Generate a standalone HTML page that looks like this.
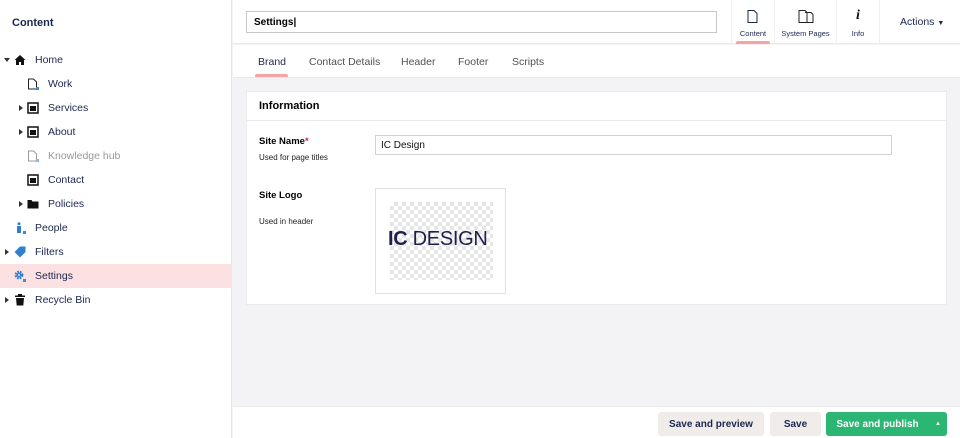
<!DOCTYPE html>
<html><head><meta charset="utf-8"><style>
*{box-sizing:border-box;margin:0;padding:0}
body{width:960px;height:438px;overflow:hidden;font-family:"Liberation Sans",sans-serif;background:#f3f3f5;position:relative;color:#1b264f}
.side{position:absolute;left:0;top:0;width:232px;height:438px;background:#fff;border-right:1px solid #e4e4e8}
.side h1{position:absolute;left:12px;top:17px;font-size:11px;font-weight:bold;color:#1b264f}
.row{position:absolute;left:0;width:232px;height:24px;font-size:10.5px;line-height:25px;color:#1b264f}
.row .t{position:absolute}
.row .ic{position:absolute;top:6px;width:12px;height:12px}
.row .ar{position:absolute;top:9px;width:0;height:0;border-left:4px solid #333;border-top:3px solid transparent;border-bottom:3px solid transparent}
.row .ard{position:absolute;top:10px;width:0;height:0;border-top:4px solid #333;border-left:3px solid transparent;border-right:3px solid transparent}
.top{position:absolute;left:233px;top:0;width:727px;height:44px;background:#fff;border-bottom:1px solid #e9e9eb}
.name{position:absolute;left:13px;top:11px;width:471px;height:22px;border:1px solid #c8c8cc;font-size:10px;font-weight:bold;line-height:21px;padding-left:7px;color:#000}
.app{position:absolute;top:0;height:44px;text-align:center;font-size:7.5px;color:#1b264f;border-left:1px solid #f0f0f0}
.tabs{position:absolute;left:233px;top:45px;width:727px;height:33px;background:#fff;border-bottom:1px solid #e9e9eb}
.tab{position:absolute;top:11px;font-size:10.5px;color:#515054}
.panel{position:absolute;left:246px;top:91px;width:701px;height:214px;background:#fff;border:1px solid #eaeaec}
.lbl{position:absolute;font-size:9.5px;font-weight:bold;color:#000}
.sub{position:absolute;font-size:8px;color:#222}
.foot{position:absolute;left:233px;top:406px;width:727px;height:32px;background:#fff;border-top:1px solid #e9e9eb}
.btn{position:absolute;top:5px;height:24px;border-radius:3px;font-size:10px;font-weight:bold;line-height:25px;text-align:center}
</style></head><body>
<div class="side"><h1>Content</h1>
<div class="row" style="top:48px"><span class="ard" style="left:4px"></span><svg class="ic" style="left:14px" viewBox="0 0 12 12"><path d="M6 1L0.5 6H2v5h3V8h2v3h3V6h1.5z" fill="#111"/></svg><span class="t" style="left:35px">Home</span></div>
<div class="row" style="top:72px"><svg class="ic" style="left:27px" viewBox="0 0 12 12"><path d="M1.5 1h5l3 3v7h-8z" fill="none" stroke="#222"/><rect x="9" y="9" width="3" height="3" fill="#3a8fd8"/></svg><span class="t" style="left:48px">Work</span></div>
<div class="row" style="top:96px"><span class="ar" style="left:19px"></span><svg class="ic" style="left:27px" viewBox="0 0 12 12"><rect x="1" y="1" width="10" height="10" fill="none" stroke="#111" stroke-width="1.5"/><rect x="3" y="4" width="6" height="5" fill="#111"/></svg><span class="t" style="left:48px">Services</span></div>
<div class="row" style="top:120px"><span class="ar" style="left:19px"></span><svg class="ic" style="left:27px" viewBox="0 0 12 12"><rect x="1" y="1" width="10" height="10" fill="none" stroke="#111" stroke-width="1.5"/><rect x="3" y="4" width="6" height="5" fill="#111"/></svg><span class="t" style="left:48px">About</span></div>
<div class="row" style="top:144px;color:#999"><svg class="ic" style="left:27px" viewBox="0 0 12 12"><path d="M1.5 1h5l3 3v7h-8z" fill="none" stroke="#999"/><rect x="9" y="9" width="3" height="3" fill="#8bb8e0"/></svg><span class="t" style="left:48px">Knowledge hub</span></div>
<div class="row" style="top:168px"><svg class="ic" style="left:27px" viewBox="0 0 12 12"><rect x="1" y="1" width="10" height="10" fill="none" stroke="#111" stroke-width="1.5"/><rect x="3" y="4" width="6" height="5" fill="#111"/></svg><span class="t" style="left:48px">Contact</span></div>
<div class="row" style="top:192px"><span class="ar" style="left:19px"></span><svg class="ic" style="left:27px" viewBox="0 0 12 12"><path d="M0.5 2h4l1 1.5h6v7h-11z" fill="#111"/></svg><span class="t" style="left:48px">Policies</span></div>
<div class="row" style="top:216px"><svg class="ic" style="left:14px" viewBox="0 0 12 12"><circle cx="5" cy="1.8" r="1.5" fill="#2f7fd1"/><rect x="3" y="4" width="4" height="7" fill="#2f7fd1"/><rect x="9" y="9" width="3" height="3" fill="#3a8fd8"/></svg><span class="t" style="left:35px">People</span></div>
<div class="row" style="top:240px"><span class="ar" style="left:5px"></span><svg class="ic" style="left:14px" viewBox="0 0 12 12"><path d="M6 0.5h5.5V6L6 11.5 0.5 6z" fill="#2f7fd1"/></svg><span class="t" style="left:35px">Filters</span></div>
<div class="row" style="top:264px;background:#fbe1e1"><svg class="ic" style="left:14px" viewBox="0 0 12 12"><circle cx="5" cy="5" r="3.2" fill="none" stroke="#2f7fd1" stroke-width="2.4" stroke-dasharray="1.6 1"/><circle cx="5" cy="5" r="2.4" fill="#2f7fd1"/><circle cx="5" cy="5" r="1" fill="#fbe1e1"/><rect x="9" y="9" width="3" height="3" fill="#3a8fd8"/></svg><span class="t" style="left:35px">Settings</span></div>
<div class="row" style="top:288px"><span class="ar" style="left:5px"></span><svg class="ic" style="left:14px" viewBox="0 0 12 12"><rect x="1" y="1.5" width="10" height="1.5" fill="#111"/><rect x="4" y="0" width="4" height="1.5" fill="#111"/><path d="M2 4h8l-0.7 7.5h-6.6z" fill="#111"/></svg><span class="t" style="left:35px">Recycle Bin</span></div>
</div>
<div class="top">
<div class="name">Settings|</div>
<div class="app" style="left:498px;width:43px"><svg style="position:absolute;left:15px;top:10px" width="11" height="13" viewBox="0 0 11 13"><path d="M1 0.5h6l3 3v9H1z" fill="none" stroke="#1b264f"/></svg><div style="position:absolute;top:29px;width:100%">Content</div><div style="position:absolute;left:4px;right:4px;bottom:0;height:3px;background:#f5a3a3;border-radius:2px 2px 0 0"></div></div>
<div class="app" style="left:541px;width:62px"><svg style="position:absolute;left:23px;top:10px" width="16" height="13" viewBox="0 0 16 13"><path d="M1 0.5h6l2 2v10H1z M7 2.5h6l2 2v8H9" fill="none" stroke="#222"/></svg><div style="position:absolute;top:29px;width:100%">System Pages</div></div>
<div class="app" style="left:603px;width:44px;border-right:1px solid #f0f0f0"><div style="position:absolute;top:8px;width:100%;font-size:14px;font-weight:bold;font-style:italic;font-family:'Liberation Serif',serif;color:#111">i</div><div style="position:absolute;top:29px;width:100%">Info</div></div>
<div style="position:absolute;left:667px;top:16px;font-size:10.5px;color:#1b264f">Actions <span style="font-size:7px">▼</span></div>
</div>
<div class="tabs">
<div class="tab" style="left:25px;color:#1b264f">Brand</div><div style="position:absolute;left:22px;top:29px;width:33px;height:3px;background:#f5a3a3;border-radius:2px 2px 0 0"></div>
<div class="tab" style="left:76px">Contact Details</div>
<div class="tab" style="left:168px">Header</div>
<div class="tab" style="left:225px">Footer</div>
<div class="tab" style="left:279px">Scripts</div>
</div>
<div class="panel">
<div style="position:absolute;left:0;top:0;width:100%;height:29px;border-bottom:1px solid #eaeaec"><div style="position:absolute;left:12px;top:8px;font-size:11px;font-weight:bold;color:#000">Information</div></div>
<div class="lbl" style="left:12px;top:44px">Site Name<span style="color:#d42054">*</span></div>
<div class="sub" style="left:12px;top:61px">Used for page titles</div>
<div style="position:absolute;left:128px;top:43px;width:517px;height:20px;border:1px solid #d0d0d4;font-size:10px;line-height:19px;padding-left:5px;color:#111">IC Design</div>
<div class="lbl" style="left:12px;top:98px">Site Logo</div>
<div class="sub" style="left:12px;top:125px">Used in header</div>
<div style="position:absolute;left:128px;top:96px;width:131px;height:106px;border:1px solid #e0e0e4">
<div style="position:absolute;left:14px;top:13px;width:103px;height:78px;background-color:#fff;background-image:linear-gradient(45deg,#e6e6e6 25%,transparent 25%,transparent 75%,#e6e6e6 75%),linear-gradient(45deg,#e6e6e6 25%,transparent 25%,transparent 75%,#e6e6e6 75%);background-size:8px 8px;background-position:0 0,4px 4px"></div>
<div style="position:absolute;left:12px;top:39px;font-size:20px;color:#1f1f4d;letter-spacing:-0.3px"><b>IC</b> DESIGN</div>
</div>
</div>
<div class="foot">
<div class="btn" style="left:425px;width:106px;background:#f0ecea;color:#1b264f">Save and preview</div>
<div class="btn" style="left:537px;width:51px;background:#f0ecea;color:#1b264f">Save</div>
<div class="btn" style="left:593px;width:121px;background:#2bb673;color:#fff;padding-right:18px">Save and publish<span style="position:absolute;right:6px;font-size:6px">▲</span></div>
</div>
</body></html>
